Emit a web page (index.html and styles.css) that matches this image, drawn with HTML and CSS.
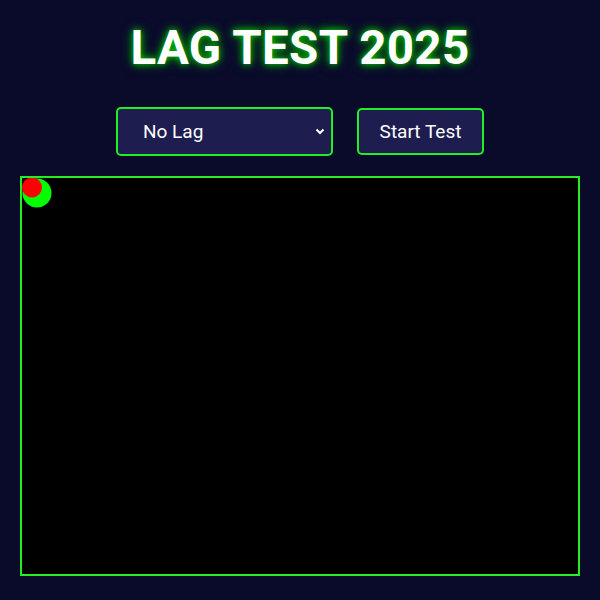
FILE: index.html
```html
<!DOCTYPE html>
<html>
<head>
<meta charset="utf-8">
<link rel="stylesheet" href="styles.css">
</head>
<body>
<h1 class="title">LAG TEST 2025</h1>
<div class="controls">
  <div class="select">
    <span>No Lag</span>
    <svg class="chev" width="10" height="7" viewBox="0 0 10 7"><path d="M1.5 1.5 L5 5 L8.5 1.5" fill="none" stroke="#fff" stroke-width="2"/></svg>
  </div>
  <button class="btn">Start Test</button>
</div>
<div class="stage">
  <svg class="balls" width="40" height="40" viewBox="0 0 40 40">
    <circle cx="15" cy="15" r="14.5" fill="#00ff00"/>
    <circle cx="10" cy="9.5" r="10" fill="#ff0000"/>
  </svg>
</div>
</body>
</html>
```
FILE: styles.css
```css
html, body { margin: 0; padding: 0; }
body {
  background: #0a0a2b;
  width: 600px;
  height: 600px;
  font-family: Roboto, "Liberation Sans", sans-serif;
  color: #fff;
  display: flex;
  flex-direction: column;
  align-items: center;
}
.title {
  margin: 20px 0 0;
  height: 56px;
  line-height: 56px;
  font-size: 47.5px;
  font-weight: 700;
  letter-spacing: 0.3px;
  text-shadow: 0 0 6px #00cc00, 0 0 12px #008800;
}
.controls {
  margin-top: 31px;
  display: flex;
  gap: 24px;
  align-items: center;
}
.select {
  box-sizing: border-box;
  width: 217px;
  height: 49px;
  border: 2px solid #22ee22;
  border-radius: 5px;
  background: #1e1d4f;
  display: flex;
  align-items: center;
  justify-content: space-between;
  padding: 0 4px 0 25px;
  font-size: 19px;
}
.chev { margin-right: 2px; }
.btn {
  box-sizing: border-box;
  width: 127px;
  height: 47px;
  border: 2px solid #22ee22;
  border-radius: 5px;
  background: #1e1d4f;
  color: #fff;
  font-family: Roboto, "Liberation Sans", sans-serif;
  font-size: 19px;
  padding: 0;
}
.stage {
  margin-top: 20px;
  box-sizing: border-box;
  width: 560px;
  height: 400px;
  border: 2px solid #22ee22;
  background: #000;
  position: relative;
}
.balls { position: absolute; left: 0; top: 0; }
```
